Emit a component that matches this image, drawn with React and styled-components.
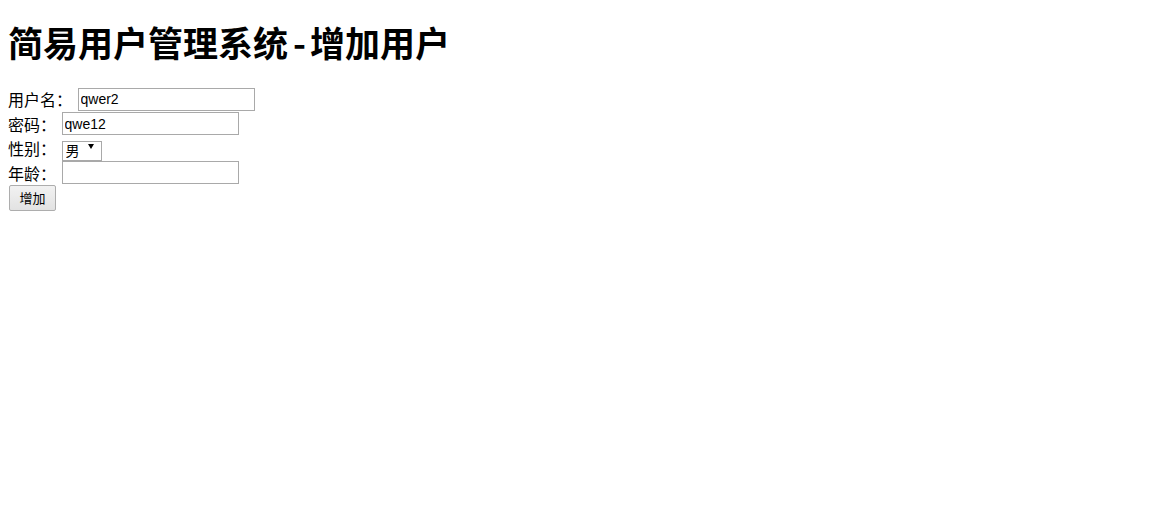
import React, { useState } from "react";
import styled, { createGlobalStyle } from "styled-components";

const GlobalStyle = createGlobalStyle`
  body {
    margin: 8px;
    background: #ffffff;
    color: #000000;
    font-family: "Noto Sans CJK SC", "Liberation Sans", sans-serif;
  }
`;

function App() {
  const [name, setName] = useState("qwer2");
  const [pwd, setPwd] = useState("qwe12");
  const [sex, setSex] = useState("男");
  const [age, setAge] = useState("");

  return (
    <>
      <GlobalStyle />
      <Title>
        简易用户管理系统<Dash>-</Dash>增加用户
      </Title>
      <Form onSubmit={(e) => e.preventDefault()}>
        <Row>
          <Label>用户名：</Label>
          <TextInput value={name} onChange={(e) => setName(e.target.value)} />
        </Row>
        <Row>
          <Label>密码：</Label>
          <TextInput value={pwd} onChange={(e) => setPwd(e.target.value)} />
        </Row>
        <Row>
          <Label>性别：</Label>
          <SelectBox>
            <Select value={sex} onChange={(e) => setSex(e.target.value)}>
              <option value="男">男</option>
              <option value="女">女</option>
            </Select>
            <Arrow />
          </SelectBox>
        </Row>
        <Row>
          <Label>年龄：</Label>
          <TextInput value={age} onChange={(e) => setAge(e.target.value)} />
        </Row>
        <SubmitBt type="submit">增加</SubmitBt>
      </Form>
    </>
  );
}

export default App;

const Title = styled.h1`
  margin: 14.8px 0 21.44px;
  font-size: 35px;
  line-height: 37px;
  font-weight: 700;
  white-space: nowrap;
  font-family: "Noto Sans CJK SC", sans-serif;
`;

const Dash = styled.span`
  padding: 0 4px 0 5px;
`;

const Form = styled.form`
  display: flex;
  flex-direction: column;
  align-items: flex-start;
  padding-top: 5.6px;
`;

const Row = styled.div`
  display: flex;
  align-items: center;
  gap: 5.5px;
  height: 24.5px;
`;

const Label = styled.span`
  font-size: 16px;
  line-height: 20px;
  font-family: "Noto Sans CJK SC", sans-serif;
`;

const TextInput = styled.input`
  box-sizing: border-box;
  width: 177px;
  height: 23px;
  padding: 1px 2px;
  border: 1px solid #a9a9a9;
  font-family: "Liberation Sans", Arial, sans-serif;
  font-size: 14px;
  color: #000;
  background: #fff;
  &:focus { outline: none; }
`;

const SelectBox = styled.div`
  position: relative;
  width: 40px;
  height: 20px;
  margin-top: -2px;
`;

const Select = styled.select`
  appearance: none;
  box-sizing: border-box;
  width: 40px;
  height: 20px;
  padding: 0 0 2px 3px;
  border: 1px solid #a9a9a9;
  border-radius: 0;
  background: #fff;
  font-family: "Noto Sans CJK SC", sans-serif;
  font-size: 14px;
  line-height: 16px;
  color: #000;
  &:focus { outline: none; }
`;

const Arrow = styled.span`
  position: absolute;
  right: 8px;
  top: 7px;
  width: 0;
  height: 0;
  border-left: 3.5px solid transparent;
  border-right: 3.5px solid transparent;
  border-top: 5px solid #000;
  pointer-events: none;
`;

const SubmitBt = styled.button`
  box-sizing: border-box;
  width: 47px;
  height: 26px;
  margin-left: 1px;
  padding: 0;
  border: 1px solid #adadad;
  border-radius: 2px;
  background: linear-gradient(#f2f2f2, #e2e2e2);
  font-family: "Noto Sans CJK SC", sans-serif;
  font-size: 13px;
  color: #000;
  cursor: pointer;
`;
